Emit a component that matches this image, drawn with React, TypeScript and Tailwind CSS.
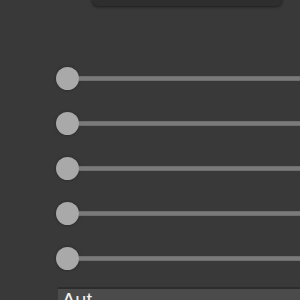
export default function App() {
  const rows = [0, 1, 2, 3, 4];
  return (
    <div className="w-[300px] h-[300px] overflow-hidden bg-[#393939] flex flex-col" style={{ fontFamily: '"Liberation Sans", Arial, sans-serif' }}>
      <div className="ml-[92px] w-[190px] h-[20px] -mt-[14px] shrink-0 rounded-md bg-[#2e2e2e] shadow-[0_1px_3px_rgba(0,0,0,0.5)]" />
      <div className="flex flex-col gap-[22px] mt-[61px] pl-[56px]">
        {rows.map((r) => (
          <div key={r} className="flex items-center h-[23px]">
            <div className="w-[23px] h-[23px] rounded-full bg-[#a9a9a9] shrink-0 shadow-[0_0_3px_rgba(0,0,0,0.35)]" />
            <div className="flex-1 h-[5px] bg-[#7a7a7a] border-y border-[#6e6e6e]" />
          </div>
        ))}
      </div>
      <div className="mt-[17px] ml-[58px] border-t-2 border-[#2c2c2c] bg-[#4b4b4b] h-[30px] px-[4px] pt-[1px] text-[20px] text-[#f2f2f2] leading-none">
        Aut
      </div>
    </div>
  );
}
